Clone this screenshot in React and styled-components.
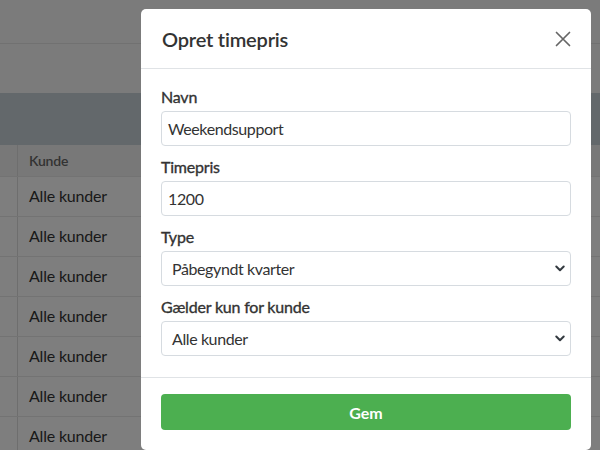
import React from "react";
import styled, { createGlobalStyle } from "styled-components";

const Global = createGlobalStyle`
  html, body { margin: 0; padding: 0; }
  body {
    font-family: Lato, "Noto Sans", "Liberation Sans", sans-serif;
    background: #fff;
    color: #212529;
    overflow: hidden;
  }
  * { box-sizing: border-box; }
`;

const Page = styled.div`
  width: 600px;
  height: 450px;
  position: relative;
  overflow: hidden;
  background: #fff;
`;

const TopBar = styled.div`
  height: 44px;
  background: #f7f7f7;
  border-bottom: 1px solid #e2e2e2;
`;

const SubBar = styled.div`
  height: 49px;
  background: #f6f6f6;
`;

const Band = styled.div`
  height: 52px;
  background: #c6d0d6;
`;

const Table = styled.div`
  display: flex;
  flex-direction: column;
`;

const Row = styled.div`
  display: grid;
  grid-template-columns: 18px 1fr;
  height: ${(p) => (p.$head ? "32px" : "40px")};
  background: ${(p) => (p.$head ? "#f1f1f1" : "#fdfdfd")};
  border-bottom: 1px solid #e6e6e6;
`;

const Cell = styled.div`
  display: flex;
  align-items: center;
  padding-left: ${(p) => (p.$first ? "0" : "11px")};
  padding-bottom: ${(p) => (p.$head ? "0" : "3px")};
  border-right: ${(p) => (p.$first ? "1px solid #dcdcdc" : "none")};
  font-size: ${(p) => (p.$head ? "14px" : "16px")};
  font-weight: ${(p) => (p.$head ? 600 : 400)};
  letter-spacing: -0.2px;
  color: ${(p) => (p.$head ? "#666" : "#333")};
`;

const Overlay = styled.div`
  position: absolute;
  inset: 0;
  background: rgba(0, 0, 0, 0.5);
  padding: 9px 0 0 141px;
`;

const Modal = styled.div`
  width: 450px;
  background: #fff;
  border-radius: 5px;
  display: flex;
  flex-direction: column;
`;

const Header = styled.div`
  height: 60px;
  display: flex;
  align-items: center;
  justify-content: space-between;
  padding: 0 20px 0 21px;
  border-bottom: 1px solid #e0e3e6;
`;

const Title = styled.h2`
  margin: 0;
  font-size: 20px;
  font-weight: 600;
  letter-spacing: -0.2px;
  color: #333;
`;

const Close = styled.button`
  border: 0;
  background: none;
  padding: 0;
  width: 16px;
  height: 16px;
  display: flex;
  cursor: pointer;
`;

const Body = styled.div`
  padding: 16px 20px 12px 20px;
`;

const Group = styled.div`
  margin-bottom: 9px;
`;

const Label = styled.label`
  display: block;
  font-size: 16px;
  line-height: 24px;
  font-weight: 400;
  -webkit-text-stroke: 0.35px #333;
  letter-spacing: -0.2px;
  color: #333;
  margin-bottom: 2px;
`;

const Field = styled.div`
  height: 35px;
  border: 1px solid #d6dbe0;
  border-radius: 4px;
  display: flex;
  align-items: center;
  justify-content: space-between;
  padding: 0 ${(p) => (p.$select ? "5px 0 10px" : "6px")};
  font-size: 16px;
  letter-spacing: -0.4px;
  color: #333;
  background: #fff;
`;

const Footer = styled.div`
  border-top: 1px solid #e0e3e6;
  padding: 16px 20px 20px 20px;
`;

const Button = styled.button`
  width: 100%;
  height: 36px;
  border: 0;
  border-radius: 4px;
  background: #4caf50;
  color: #fff;
  font-family: inherit;
  font-size: 16px;
  font-weight: 700;
`;

const Chevron = () => (
  <svg width="10" height="7" viewBox="0 0 10 7">
    <path d="M1.3 1.5 L5 5.2 L8.7 1.5" fill="none" stroke="#343a40" strokeWidth="2" strokeLinecap="round" strokeLinejoin="round" />
  </svg>
);

export default function App() {
  const rows = Array.from({ length: 7 });
  return (
    <>
      <Global />
      <Page>
        <TopBar />
        <SubBar />
        <Band />
        <Table>
          <Row $head>
            <Cell $first $head />
            <Cell $head>Kunde</Cell>
          </Row>
          {rows.map((_, i) => (
            <Row key={i}>
              <Cell $first />
              <Cell>Alle kunder</Cell>
            </Row>
          ))}
        </Table>
        <Overlay>
          <Modal>
            <Header>
              <Title>Opret timepris</Title>
              <Close aria-label="Luk">
                <svg width="16" height="16" viewBox="0 0 16 16">
                  <path d="M1.5 1.5 L14.5 14.5 M14.5 1.5 L1.5 14.5" stroke="#666" strokeWidth="1.7" strokeLinecap="round" />
                </svg>
              </Close>
            </Header>
            <Body>
              <Group>
                <Label>Navn</Label>
                <Field>Weekendsupport</Field>
              </Group>
              <Group>
                <Label>Timepris</Label>
                <Field>1200</Field>
              </Group>
              <Group>
                <Label>Type</Label>
                <Field $select>
                  Påbegyndt kvarter
                  <Chevron />
                </Field>
              </Group>
              <Group>
                <Label>Gælder kun for kunde</Label>
                <Field $select>
                  Alle kunder
                  <Chevron />
                </Field>
              </Group>
            </Body>
            <Footer>
              <Button>Gem</Button>
            </Footer>
          </Modal>
        </Overlay>
      </Page>
    </>
  );
}
